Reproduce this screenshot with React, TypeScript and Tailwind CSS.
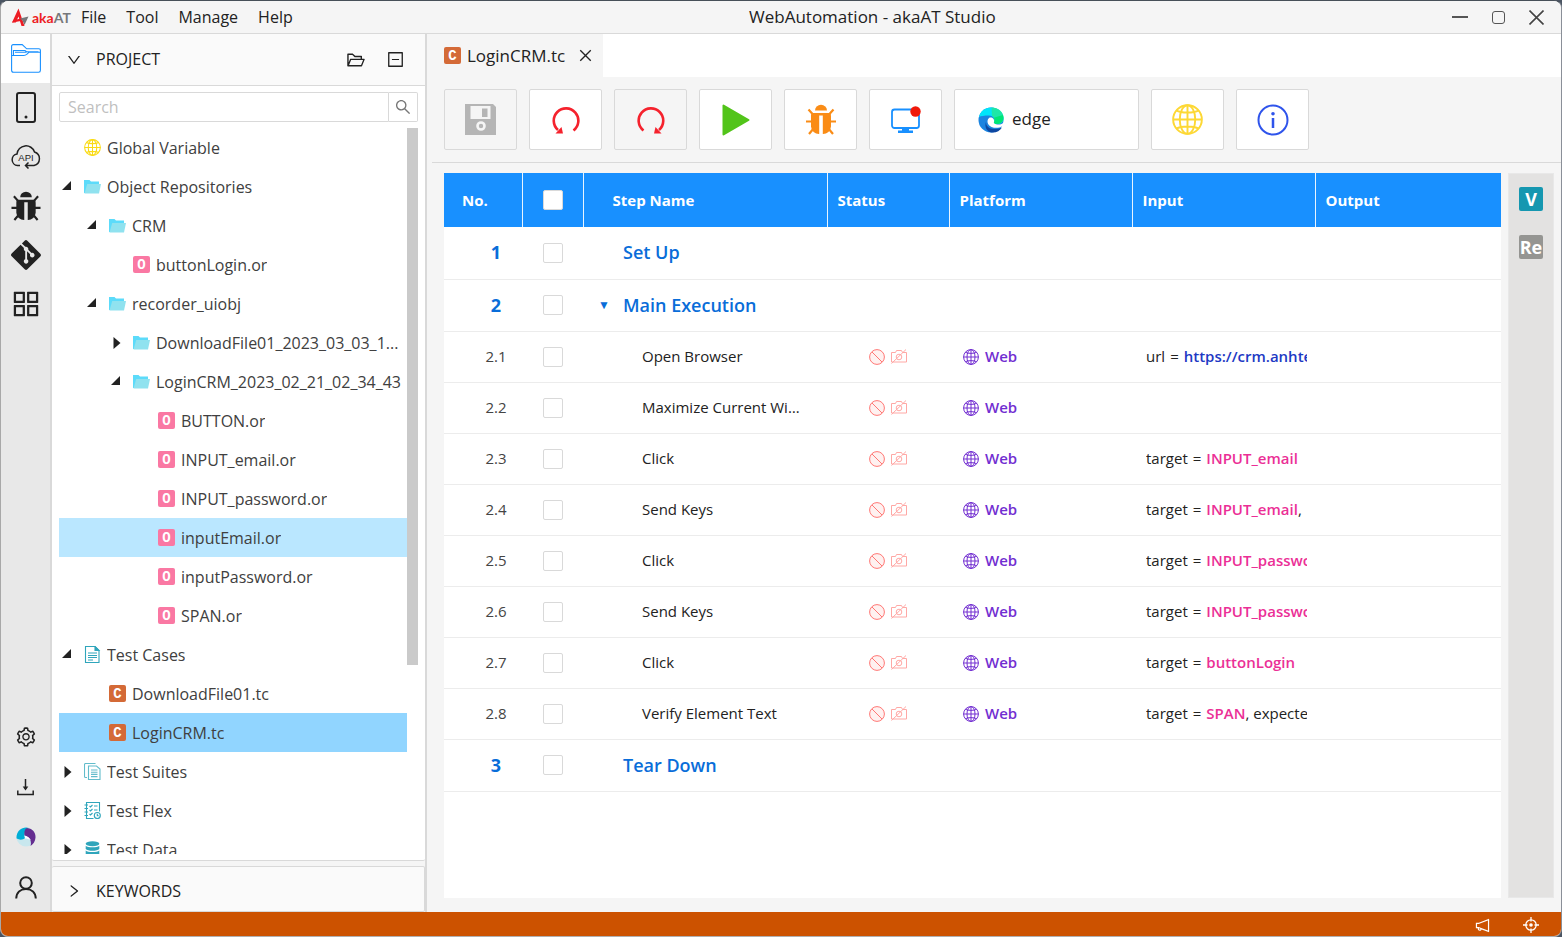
import React, { useState } from 'react';
import {
  AiOutlineAppstore,
  AiOutlineClose,
  AiOutlineDown,
  AiOutlineFolderOpen,
  AiOutlineMinusSquare,
  AiOutlineNotification,
  AiOutlineRight,
  AiOutlineSearch,
  AiOutlineSetting,
} from 'react-icons/ai';
import { FaGitAlt } from 'react-icons/fa';

type IconProps = { className?: string };

const GlobeIcon: React.FC<IconProps> = ({ className }) => (
  <svg viewBox="0 0 32 32" fill="none" stroke="currentColor" strokeWidth="2" className={className}>
    <circle cx="16" cy="16" r="14.8" />
    <ellipse cx="16" cy="16" rx="8" ry="14.8" />
    <path d="M16 1v30M1 16h30M4.5 6.5c5 3 18 3 23 0M4.5 25.500c5-3 18-3 23 0" />
  </svg>
);

const BugIcon: React.FC<IconProps> = ({ className }) => (
  <svg viewBox="0 0 30 31" className={className}>
    <path d="M9 6.500a6 5.800 0 0 1 12 0z" fill="currentColor" />
    <path d="M5.500 9h19c.3 1 .5 2 .5 4v9.500a8 8 0 0 1-8.200 7.500V11.500h-3.600V30A8 8 0 0 1 5 22.500V13c0-2 .2-3 .5-4z" fill="currentColor" />
    <path d="M2.500 5.500 7 10.500M27.500 5.500 23 10.500M0 17.500h7M30 17.500h-7M3 30l5-6M27 30l-5-6" stroke="currentColor" strokeWidth="2.2" fill="none" />
  </svg>
);

const ProjectIcon: React.FC = () => (
  <svg viewBox="0 0 30 29" fill="none" stroke="#1890ff" strokeWidth="1.100" className="h-[29px] w-[30px]">
    <path d="M.6 8.500V2.200C.6 1.200 1.200.6 2.200.6h9l4.500 4.200h12.200c1 0 1.500.6 1.500 1.500v20c0 1.200-.6 2-1.800 2H2.500c-1.200 0-1.900-.8-1.900-2z" />
    <path d="M.6 11.500h12.200c2 0 2.500-.8 3.500-1.700l1.500-1.500h11.500M2.500 11V6.500h11.500l1.500 1.200h12M4 8.200h11.500" />
  </svg>
);

const PhoneIcon: React.FC = () => (
  <svg viewBox="0 0 20 31" className="h-[31px] w-5">
    <rect x="1" y="1" width="18" height="29" rx="2" fill="none" stroke="currentColor" strokeWidth="2" />
    <circle cx="10" cy="25" r="1.500" fill="currentColor" />
  </svg>
);

const ApiIcon: React.FC = () => (
  <svg viewBox="0 0 30 25" fill="none" stroke="currentColor" strokeWidth="1.500" className="h-[25px] w-[30px]">
    <path d="M9 21.500H6.500A5.800 5.800 0 0 1 6 10a9 9 0 0 1 17.500-2 7 7 0 0 1-.5 13.500h-8.500M17.500 18.500l-3 3 3 3" />
    <text x="15" y="16.500" fontSize="9.500" textAnchor="middle" fill="currentColor" stroke="none" className="font-['Liberation_Sans']">API</text>
  </svg>
);

const DownloadIcon: React.FC = () => (
  <svg viewBox="0 0 17 17" fill="none" stroke="currentColor" strokeWidth="1.500" className="size-[17px]">
    <path d="M.8 11.500v4h15.400v-4M8.500 0v10" />
    <path d="M5.700 7.500h5.600l-2.800 4z" fill="currentColor" stroke="none" />
  </svg>
);

const SwirlIcon: React.FC = () => (
  <svg viewBox="0 0 20 20" className="size-5">
    <circle cx="10" cy="10" r="9.500" fill="#c8e7ee" />
    <path d="M.6 11.500A9.600 9.600 0 0 1 13 1c-4 2-5.500 6-4 10-2 1.800-5 2.300-8.400.5z" fill="#00aed6" />
    <path d="M10 1.500C15 0 20 5 19.500 10.500c-.2 4-2.500 7-5 8.500 1.500-4-.5-9-6-10.500C8 5.500 8.500 3 10 1.500z" fill="#652d90" />
    <path d="M8.500 8.500c3 .5 5.500 2.500 6.500 5-2-1.500-4-2-6-2z" fill="#fff" />
  </svg>
);

const UserIcon: React.FC = () => (
  <svg viewBox="0 0 22 23" fill="none" stroke="currentColor" strokeWidth="2" className="h-[23px] w-[22px]">
    <circle cx="11" cy="7" r="5.800" />
    <path d="M1.200 22.500C1.500 16.500 5.500 13 11 13s9.500 3.500 9.800 9.500" />
  </svg>
);

const FolderIcon: React.FC = () => (
  <svg viewBox="0 0 17 14" className="h-[14px] w-[17px] shrink-0">
    <path d="M0 0h5.500l1.500 1.500h8V13H0z" fill="#5cdbfa" />
    <path d="M3.200 4H17l-2 9.500H.5z" fill="#90e2ef" />
  </svg>
);

const CaseIcon: React.FC = () => (
  <svg viewBox="0 0 17 17" fill="none" stroke="#2fa5bb" strokeWidth="1.100" className="size-[17px] shrink-0">
    <path d="M1.500.5h9.500l4 4v12H1.500zM4 7h9M4 9.500h9M4 11.500h9M4 14h5" />
    <path d="M11 .5v4h4z" fill="#2fa5bb" />
  </svg>
);

const SuiteIcon: React.FC = () => (
  <svg viewBox="0 0 17 17" fill="none" stroke="#62bccb" strokeWidth="1.100" className="size-[17px] shrink-0">
    <path d="M3 14.500H1.500a1 1 0 0 1-1-1v-12a1 1 0 0 1 1-1h10M4.500 3h8l3.500 3v10.500H4.500zM7 7h6.500M7 9.200h6.500M7 11.400h6.500M7 13.600h6.500" />
  </svg>
);

const FlexIcon: React.FC = () => (
  <svg viewBox="0 0 17 17" fill="none" stroke="#2fa5bb" strokeWidth="1.100" className="size-[17px] shrink-0">
    <path d="M9.500 16.500h-7V.5H15.500v9M.5 3h3.500M.5 6.500h3.500M.5 10h3.500M.5 13.500h3.500M5.500 4l1 1 2-2M10 4h3.500M5.500 8l1 1 2-2M10 8h3.500M5.500 12l1 1 2-2" />
    <circle cx="13.300" cy="13.500" r="3" />
    <path d="M13.300 11.800v1.900h1.400" />
  </svg>
);

const DataIcon: React.FC = () => (
  <svg viewBox="0 0 17 17" fill="#2fa5bb" className="size-[17px] shrink-0">
    <ellipse cx="8.500" cy="2.800" rx="6.800" ry="2.500" />
    <path d="M1.700 4.800c2 2 11.600 2 13.600 0v3.200c-2 2.400-11.600 2.400-13.600 0z" />
    <path d="M1.700 9.500c2 2 11.600 2 13.600 0v4.500c-2 3-11.600 3-13.600 0z" />
  </svg>
);

const SaveIcon: React.FC = () => (
  <svg viewBox="0 0 31 31" className="size-[31px]">
    <path d="M0 0h28l3 3v28H0z" fill="#b5b5b5" />
    <path d="M5.500 2h20v13h-20z" fill="#f5f5f5" />
    <path d="M17 4.500h5.500v8.500H17z" fill="#b5b5b5" />
    <circle cx="16" cy="22" r="3.500" fill="none" stroke="#f5f5f5" strokeWidth="2.600" />
  </svg>
);

const UndoIcon: React.FC = () => (
  <svg viewBox="0 0 28 28" className="size-7">
    <path d="M21.500 24.500A12.300 12.300 0 1 0 6 24" fill="none" stroke="#f5222d" strokeWidth="2.600" />
    <path d="M3.500 27.500 9.500 21l1.500 6.500z" fill="#f5222d" />
  </svg>
);

const RedoIcon: React.FC = () => (
  <svg viewBox="0 0 28 28" className="size-7">
    <path d="M6.500 24.500A12.300 12.300 0 1 1 22 24" fill="none" stroke="#f5222d" strokeWidth="2.600" />
    <path d="M24.500 27.500 18.500 21 17 27.500z" fill="#f5222d" />
  </svg>
);

const PlayIcon: React.FC = () => (
  <svg viewBox="0 0 28 32" className="h-8 w-7">
    <path d="M1.500 1.500v29L26.500 16z" fill="#52c41a" stroke="#52c41a" strokeWidth="2" strokeLinejoin="round" />
  </svg>
);

const RecordIcon: React.FC = () => (
  <svg viewBox="0 0 30 28" className="h-7 w-[30px]">
    <rect x="1" y="3.500" width="27" height="18.500" rx="2.500" fill="none" stroke="#1890ff" strokeWidth="1.800" />
    <path d="M11 22h7v2.500h4V27H7v-2.500h4z" fill="#1890ff" />
    <circle cx="24.500" cy="5.500" r="5.200" fill="#f0190a" />
  </svg>
);

const EdgeIcon: React.FC = () => (
  <svg viewBox="0 0 26 26" className="size-[26px]">
    <circle cx="13" cy="13" r="12.500" fill="#1b84e0" />
    <path d="M1 10C2.500 4 7 .5 13 .5S25.500 5 25.500 11c0 4-3 6-6.500 6-2.500 0-3.500-1-3-2 2-3-1-6.500-5-6.500C6.500 8.500 2.500 9 1 10z" fill="#00e5fa" />
    <path d="M13.500.5c7 0 12 4.500 12 10.500 0 4-3 6-6.500 6-2.500 0-3.500-1-3-2 1.300-2 .5-4.500-2-6z" fill="#1ee6a8" />
    <path d="M25 8c1.300 5-1.500 9-6 9-2.500 0-3.500-1-3-2 .8-1.500.7-3-.3-4.200z" fill="#00e676" />
    <path d="M8 15c0 6 6 9 16 5.500-2 3.500-6 5.500-10.500 5C8 24.500 6.500 19 8 15z" fill="#0d47a1" />
    <path d="M11 11c-2.500 2-2 7 2.500 9 4 1.500 8 1 11-1l1.500 1V15c-2 2.500-5 3-8 2.200-2-.5-2.500-1.300-2-2.200C17 12 13.500 9.500 11 11z" fill="#fff" />
  </svg>
);

const InfoIcon: React.FC = () => (
  <svg viewBox="0 0 32 32" className="size-8">
    <circle cx="16" cy="16" r="14.500" fill="none" stroke="#2f54eb" strokeWidth="2" />
    <circle cx="16" cy="9.800" r="1.800" fill="#2f54eb" />
    <path d="M16 14v10" stroke="#2f54eb" strokeWidth="2.500" />
  </svg>
);

const StopIcon: React.FC = () => (
  <svg viewBox="0 0 16 16" fill="#fff1f0" stroke="#ff7875" strokeWidth="1" className="size-4">
    <circle cx="8" cy="8" r="7.400" />
    <path d="m3 3 10 10" />
  </svg>
);

const NoCameraIcon: React.FC = () => (
  <svg viewBox="0 0 16 15" fill="none" stroke="#ffa8a5" strokeWidth="1" className="h-[15px] w-4">
    <path d="M.5 3.500h4l1-2h5l1 2h4v9.500H.5z" />
    <circle cx="8" cy="8" r="2.800" />
    <path d="M15 .5.500 14.500" />
  </svg>
);

const AimIcon: React.FC = () => (
  <svg viewBox="0 0 16 16" fill="none" stroke="currentColor" strokeWidth="1.300" className="size-4">
    <circle cx="8" cy="8" r="5.200" />
    <circle cx="8" cy="8" r="1.800" fill="currentColor" stroke="none" />
    <path d="M8 0v4.500M8 11.500V16M0 8h4.500M11.500 8H16" />
  </svg>
);

const Badge: React.FC<{ letter: string }> = ({ letter }) => (
  <span
    className={`flex size-[17px] shrink-0 items-center justify-center rounded-xs font-['Liberation_Mono',monospace] text-[14px] leading-none font-bold text-white ${
      letter === 'O' ? 'bg-[#fa78a3]' : 'bg-[#d46a37]'
    }`}
  >
    {letter}
  </span>
);

type TreeItem = {
  label: string;
  level: number;
  icon: React.ReactNode;
  open?: boolean;
  highlight?: boolean;
};

const treeItems: TreeItem[] = [
  { label: 'Global Variable', level: 0, icon: <GlobeIcon className="size-[17px] shrink-0 text-[#fadb14]" /> },
  { label: 'Object Repositories', level: 0, icon: <FolderIcon />, open: true },
  { label: 'CRM', level: 1, icon: <FolderIcon />, open: true },
  { label: 'buttonLogin.or', level: 2, icon: <Badge letter="O" /> },
  { label: 'recorder_uiobj', level: 1, icon: <FolderIcon />, open: true },
  { label: 'DownloadFile01_2023_03_03_1...', level: 2, icon: <FolderIcon />, open: false },
  { label: 'LoginCRM_2023_02_21_02_34_43', level: 2, icon: <FolderIcon />, open: true },
  { label: 'BUTTON.or', level: 3, icon: <Badge letter="O" /> },
  { label: 'INPUT_email.or', level: 3, icon: <Badge letter="O" /> },
  { label: 'INPUT_password.or', level: 3, icon: <Badge letter="O" /> },
  { label: 'inputEmail.or', level: 3, icon: <Badge letter="O" />, highlight: true },
  { label: 'inputPassword.or', level: 3, icon: <Badge letter="O" /> },
  { label: 'SPAN.or', level: 3, icon: <Badge letter="O" /> },
  { label: 'Test Cases', level: 0, icon: <CaseIcon />, open: true },
  { label: 'DownloadFile01.tc', level: 1, icon: <Badge letter="C" /> },
  { label: 'LoginCRM.tc', level: 1, icon: <Badge letter="C" /> },
  { label: 'Test Suites', level: 0, icon: <SuiteIcon />, open: false },
  { label: 'Test Flex', level: 0, icon: <FlexIcon />, open: false },
  { label: 'Test Data', level: 0, icon: <DataIcon />, open: false },
];

const indents = ['pl-0', 'pl-[25px]', 'pl-[49px]', 'pl-[74px]'];

const Caret: React.FC<{ open?: boolean }> = ({ open }) => {
  if (open === undefined) return null;
  return (
    <svg viewBox="0 0 12 14" fill="#222" className="h-[14px] w-3">
      {open ? <path d="M1 10h9V1z" /> : <path d="M3.500 1v12L10.500 7z" />}
    </svg>
  );
};

const TreeRow: React.FC<{ item: TreeItem; selected: boolean; onSelect: () => void }> = ({ item, selected, onSelect }) => (
  <li>
    <button
      onClick={onSelect}
      className={`flex h-[39px] w-full items-center text-left ${
        selected ? 'bg-[#91d5ff]' : item.highlight ? 'bg-[#bae7ff]' : ''
      }`}
    >
      <span className={`flex min-w-0 flex-1 items-center ${indents[item.level]}`}>
        <span className="w-[25px] shrink-0 pl-[2px]"><Caret open={item.open} /></span>
        {item.icon}
        <span className="ml-[6px] truncate text-[16px] text-[#404040]">{item.label}</span>
      </span>
    </button>
  </li>
);

type Step = {
  no: string;
  name: string;
  section?: boolean;
  open?: boolean;
  input?: { key: string; value: string; rest?: string; link?: boolean };
};

const steps: Step[] = [
  { no: '1', name: 'Set Up', section: true },
  { no: '2', name: 'Main Execution', section: true, open: true },
  { no: '2.1', name: 'Open Browser', input: { key: 'url', value: 'https://crm.anhtester.com', link: true } },
  { no: '2.2', name: 'Maximize Current Window' },
  { no: '2.3', name: 'Click', input: { key: 'target', value: 'INPUT_email' } },
  { no: '2.4', name: 'Send Keys', input: { key: 'target', value: 'INPUT_email', rest: ',' } },
  { no: '2.5', name: 'Click', input: { key: 'target', value: 'INPUT_password' } },
  { no: '2.6', name: 'Send Keys', input: { key: 'target', value: 'INPUT_password' } },
  { no: '2.7', name: 'Click', input: { key: 'target', value: 'buttonLogin' } },
  { no: '2.8', name: 'Verify Element Text', input: { key: 'target', value: 'SPAN', rest: ', expected' } },
  { no: '3', name: 'Tear Down', section: true },
];

const StepRow: React.FC<{ step: Step }> = ({ step }) => (
  <tr className={`border-b border-[#ececec] ${step.section ? 'h-[52px]' : 'h-[51px]'}`}>
    <td className={`pl-[26px] text-center ${step.section ? 'text-[18px] font-bold text-[#096dd9]' : 'text-[15px] text-[#444]'}`}>
      {step.no}
    </td>
    <td>
      <input
        type="checkbox"
        aria-label={`Select step ${step.no}`}
        className="mx-auto block size-5 appearance-none rounded-xs border border-[#d9d9d9] bg-white checked:bg-[#1890ff]"
      />
    </td>
    <td className="pr-5">
      {step.section ? (
        <div className="flex items-center text-[18px] font-semibold text-[#096dd9]">
          <span className="w-10 shrink-0 pl-[15px] text-[12px]">{step.open && '▼'}</span>
          {step.name}
        </div>
      ) : (
        <div className="truncate pl-[59px] text-[15px] text-[#222]">{step.name}</div>
      )}
    </td>
    <td>
      {!step.section && (
        <div className="flex items-center justify-center gap-[6px]">
          <StopIcon />
          <NoCameraIcon />
        </div>
      )}
    </td>
    <td>
      {!step.section && (
        <div className="flex items-center gap-[6px] pl-[14px] text-[15px] font-semibold text-[#722ed1]">
          <GlobeIcon className="size-4" />
          Web
        </div>
      )}
    </td>
    <td className="pr-2 pl-[14px]">
      {step.input && (
        <div className="flex gap-[5px] overflow-hidden text-[15px] whitespace-nowrap text-[#222]">
          <span>{step.input.key}</span>
          <span>=</span>
          <span>
            <span className={`font-semibold ${step.input.link ? 'text-[#1d39c4]' : 'text-[#eb2f96]'}`}>{step.input.value}</span>
            {step.input.rest}
          </span>
        </div>
      )}
    </td>
    <td></td>
  </tr>
);

const ToolButton: React.FC<{ label: string; disabled?: boolean; children: React.ReactNode }> = ({ label, disabled, children }) => (
  <button
    aria-label={label}
    disabled={disabled}
    className={`flex h-[61px] w-[73px] shrink-0 items-center justify-center rounded-xs border border-[#d9d9d9] ${
      disabled ? 'bg-[#f5f5f5]' : 'bg-white hover:border-[#40a9ff]'
    }`}
  >
    {children}
  </button>
);

const RailButton: React.FC<{ label: string; active?: boolean; children: React.ReactNode }> = ({ label, active, children }) => (
  <button
    aria-label={label}
    className={`flex w-full flex-1 items-center justify-center text-[#222] ${active ? 'bg-white' : ''}`}
  >
    {children}
  </button>
);

const TitleBar: React.FC = () => (
  <header className="flex h-[33px] shrink-0 items-center border-b border-[#d9d9d9] bg-[#f5f5f5] text-[16px] text-[#222]">
    <div className="flex w-20 shrink-0 items-center pl-[11px]">
      <svg viewBox="0 0 17 19" className="h-[19px] w-[17px]">
        <path d="M0 14.500 6.500.5 12.500 18 9.500 18 6.500 8.500 3.800 14.500z" fill="#ed1c24" />
        <path d="M0 14.500 2 12l7-1.500v2.500z" fill="#ed1c24" />
        <path d="M8 10.500 16.500 8.500 12.500 17 10.500 12.500z" fill="#77787b" />
      </svg>
      <span className="ml-[3px] font-['Lato',sans-serif] text-[14px] font-bold text-[#ed1c24]">
        aka<span className="text-[#77787b]">AT</span>
      </span>
    </div>
    <nav className="flex gap-5">
      <button>File</button>
      <button>Tool</button>
      <button>Manage</button>
      <button>Help</button>
    </nav>
    <h1 className="flex-1 text-center text-[17px]">WebAutomation - akaAT Studio</h1>
    <div className="flex items-center gap-6 pr-[17px] text-[#444]">
      <button aria-label="Minimize" className="flex h-4 w-4 items-center">
        <span className="h-[2px] w-4 bg-[#555]" />
      </button>
      <button aria-label="Maximize" className="size-[13px] rounded-[3px] border border-[#555]" />
      <button aria-label="Close">
        <svg viewBox="0 0 15 15" stroke="currentColor" strokeWidth="1.600" className="size-[15px]">
          <path d="m.5.5 14 14M14.500.5l-14 14" />
        </svg>
      </button>
    </div>
  </header>
);

const Rail: React.FC = () => (
  <nav className="flex w-[50px] shrink-0 flex-col justify-between border-r border-[#d9d9d9] bg-[#e8e8e8]">
    <div className="flex h-[294px] flex-col">
      <RailButton label="Project" active><ProjectIcon /></RailButton>
      <RailButton label="Devices"><PhoneIcon /></RailButton>
      <RailButton label="API"><ApiIcon /></RailButton>
      <RailButton label="Debug"><BugIcon className="h-[30px] w-[30px]" /></RailButton>
      <RailButton label="Git"><FaGitAlt size={34} /></RailButton>
      <RailButton label="Extensions"><AiOutlineAppstore size={34} /></RailButton>
    </div>
    <div className="flex h-[200px] flex-col">
      <RailButton label="Settings"><AiOutlineSetting size={22} /></RailButton>
      <RailButton label="Downloads"><DownloadIcon /></RailButton>
      <RailButton label="Appium"><SwirlIcon /></RailButton>
      <RailButton label="Account"><UserIcon /></RailButton>
    </div>
  </nav>
);

const SidePanel: React.FC = () => {
  const [selected, setSelected] = useState('LoginCRM.tc');

  return (
    <aside className="flex w-[376px] shrink-0 flex-col gap-[5px] border-r-2 border-l border-[#d9d9d9] bg-[#f5f5f5]">
      <section className="flex min-h-0 flex-1 flex-col rounded-xs border-b border-[#d9d9d9] bg-white">
        <div className="flex h-[52px] shrink-0 items-center border-b border-[#d9d9d9] bg-[#fafafa] pr-5 pl-[14px] text-[#222]">
          <AiOutlineDown size={16} />
          <h2 className="ml-[14px] flex-1 pb-[2px] text-[16px]">PROJECT</h2>
          <button aria-label="Open folder"><AiOutlineFolderOpen size={20} /></button>
          <button aria-label="Collapse all" className="ml-5"><AiOutlineMinusSquare size={19} /></button>
        </div>
        <div className="mx-[7px] mt-[6px] flex h-[30px] shrink-0">
          <input
            type="text"
            aria-label="Search"
            placeholder="Search"
            className="min-w-0 flex-1 rounded-l-xs border border-[#d9d9d9] px-2 text-[16px] outline-none placeholder:text-[#bfbfbf]"
          />
          <button aria-label="Run search" className="flex w-[29px] items-center justify-center rounded-r-xs border border-l-0 border-[#d9d9d9] text-[#777]">
            <AiOutlineSearch size={18} />
          </button>
        </div>
        <div className="mx-[7px] mt-[6px] mb-[6px] flex min-h-0 flex-1 overflow-hidden">
          <ul className="min-w-0 flex-1">
            {treeItems.map((item) => (
              <TreeRow
                key={item.label}
                item={item}
                selected={selected === item.label}
                onSelect={() => setSelected(item.label)}
              />
            ))}
          </ul>
          <div className="h-[74%] w-[11px] shrink-0 bg-[#cacaca]" />
        </div>
      </section>
      <section className="flex h-[46px] shrink-0 items-center rounded-xs border border-l-0 border-[#d9d9d9] bg-[#fafafa] pt-[3px] pl-[14px] text-[#222]">
        <AiOutlineRight size={16} />
        <h2 className="ml-[14px] text-[16px]">KEYWORDS</h2>
      </section>
    </aside>
  );
};

const headers = ['Status', 'Platform', 'Input', 'Output'];

const Editor: React.FC = () => (
  <main className="flex min-w-0 flex-1 flex-col bg-[#f5f5f5]">
    <div className="flex h-[43px] shrink-0 bg-white">
      <div className="flex items-center bg-[#f5f5f5] pr-[9px] pl-[17px] text-[#222]">
        <Badge letter="C" />
        <span className="ml-[6px] text-[17px]">LoginCRM.tc</span>
        <button aria-label="Close tab" className="ml-3"><AiOutlineClose size={17} /></button>
      </div>
    </div>

    <div className="ml-[5px] flex shrink-0 gap-3 border-b border-[#d9d9d9] py-3 pl-3">
      <ToolButton label="Save" disabled><SaveIcon /></ToolButton>
      <ToolButton label="Undo"><UndoIcon /></ToolButton>
      <ToolButton label="Redo" disabled><RedoIcon /></ToolButton>
      <ToolButton label="Run"><PlayIcon /></ToolButton>
      <ToolButton label="Debug"><BugIcon className="h-[31px] w-[30px] text-[#fa8c16]" /></ToolButton>
      <ToolButton label="Record"><RecordIcon /></ToolButton>
      <div className="flex h-[61px] w-[185px] items-center rounded-xs border border-[#d9d9d9] bg-white pl-[23px]">
        <EdgeIcon />
        <select aria-label="Browser" className="ml-2 flex-1 appearance-none bg-transparent pb-[2px] text-[17px] text-[#222] outline-none">
          <option>edge</option>
        </select>
      </div>
      <ToolButton label="Network"><GlobeIcon className="size-[31px] text-[#fdd835]" /></ToolButton>
      <ToolButton label="Info"><InfoIcon /></ToolButton>
    </div>

    <div className="flex min-h-0 flex-1 gap-[7px] pt-[10px] pr-[7px] pb-[14px] pl-[17px]">
      <div className="min-w-0 flex-1 overflow-hidden bg-white">
        <table className="w-full table-fixed border-collapse">
          <colgroup>
            <col className="w-[78px]" />
            <col className="w-[61px]" />
            <col className="w-[244px]" />
            <col className="w-[122px]" />
            <col className="w-[183px]" />
            <col className="w-[183px]" />
            <col />
          </colgroup>
          <thead>
            <tr className="h-[54px] bg-[#1890ff] text-left text-[15px] text-white">
              <th className="border-r border-[#e8f4ff] pl-[18px] font-bold">No.</th>
              <th className="border-r border-[#e8f4ff]">
                <input
                  type="checkbox"
                  aria-label="Select all steps"
                  className="mx-auto block size-5 appearance-none rounded-xs border border-[#d9d9d9] bg-white"
                />
              </th>
              <th className="border-r border-[#e8f4ff] pl-[29px] font-bold">Step Name</th>
              {headers.map((h) => (
                <th key={h} className="border-r border-[#e8f4ff] pl-[10px] font-bold last:border-r-0">{h}</th>
              ))}
            </tr>
          </thead>
          <tbody>
            {steps.map((step) => (
              <StepRow key={step.no} step={step} />
            ))}
          </tbody>
        </table>
      </div>
      <div className="flex w-[46px] shrink-0 flex-col items-center gap-6 border border-[#e8e8e8] bg-[#e3e2e1] pt-[13px] text-[18px] leading-none font-bold text-white">
        <button className="flex size-6 items-center justify-center rounded-xs bg-[#1597b0]">V</button>
        <button className="flex size-6 items-center justify-center rounded-xs bg-[#959592]">Re</button>
      </div>
    </div>
  </main>
);

const App: React.FC = () => (
  <div className="h-screen bg-[#4b5563] font-['Open_Sans','Noto_Sans',sans-serif]">
    <div className="flex h-full flex-col overflow-hidden rounded-lg border border-t-[#475059] border-r-[#8a8f98] border-b-[#b0b0b0] border-l-[#a8a8a8] bg-[#f5f5f5]">
      <TitleBar />
      <div className="flex min-h-0 flex-1">
        <Rail />
        <SidePanel />
        <Editor />
      </div>
      <footer className="flex h-6 shrink-0 items-center justify-end gap-8 bg-[#cc5200] pt-[2px] pr-[22px] text-white">
        <button aria-label="Notifications"><AiOutlineNotification size={17} /></button>
        <button aria-label="Locate"><AimIcon /></button>
      </footer>
    </div>
  </div>
);

export default App;
